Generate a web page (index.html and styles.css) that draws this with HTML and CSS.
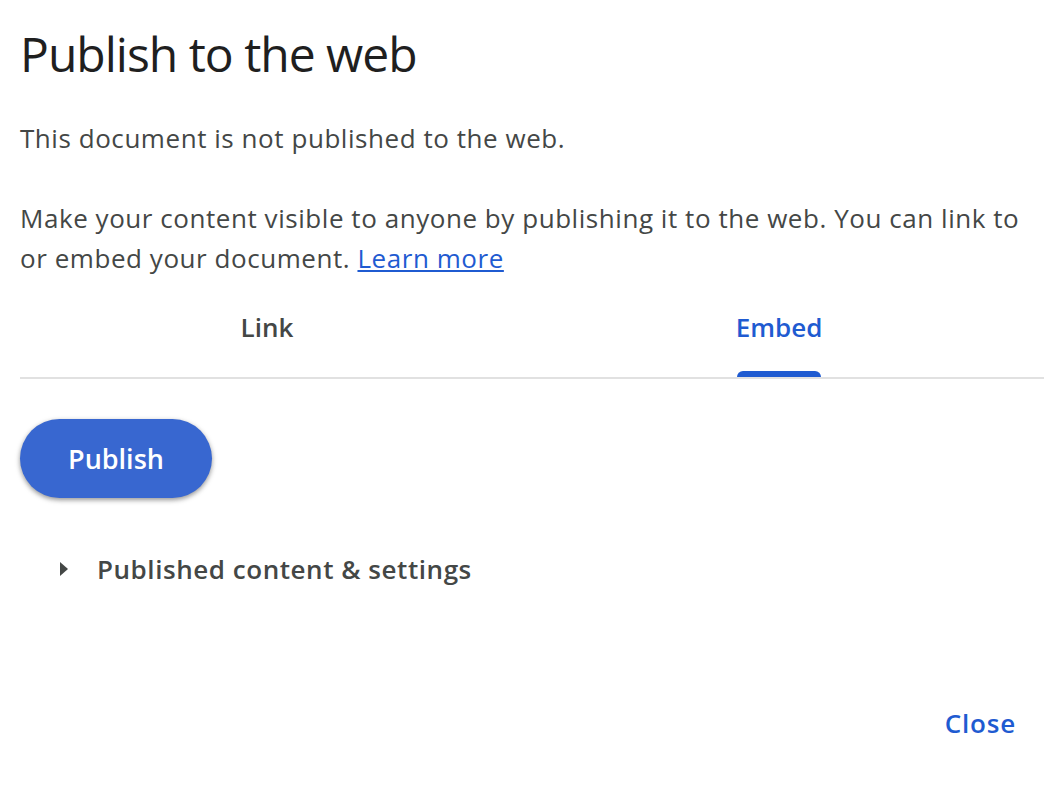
FILE: index.html
```html
<!DOCTYPE html>
<html lang="en">
<head>
    <meta charset="UTF-8">
    <meta name="viewport" content="width=device-width, initial-scale=1.0">
    <title>Publish to the web</title>
    <link rel="stylesheet" href="styles.css">
</head>
<body>
    <div class="dialog">
        <h1 class="title">Publish to the web</h1>

        <p class="status">This document is not published to the web.</p>

        <p class="intro">Make your content visible to anyone by publishing it to the web. You can link to or embed your document. <a href="#" class="learn-more">Learn more</a></p>

        <div class="tabs">
            <div class="tab-list">
                <div class="tab">Link</div>
                <div class="tab tab-active">Embed</div>
            </div>
        </div>

        <div class="tab-body">
            <button class="publish-btn">Publish</button>

            <div class="settings-toggle">
                <span class="caret"></span>
                <span class="settings-label">Published content &amp; settings</span>
            </div>
        </div>

        <div class="footer">
            <a href="#" class="close-btn">Close</a>
        </div>
    </div>
</body>
</html>
```

FILE: styles.css
```css
body {
    margin: 0;
    background-color: #fff;
    font-family: "Open Sans", Roboto, sans-serif;
    color: #444746;
}
.dialog {
    width: 1024px;
    padding: 0 20px;
}
.title {
    margin: 0;
    padding-top: 24px;
    font-size: 48px;
    font-weight: 400;
    line-height: 60px;
    letter-spacing: -1px;
    color: #1f1f1f;
}
.status {
    margin: 34px 0 0;
    font-size: 26px;
    line-height: 40px;
    letter-spacing: 0.55px;
}
.intro {
    margin: 40px 0 0;
    font-size: 26px;
    line-height: 40px;
    letter-spacing: 0.55px;
}
.learn-more {
    color: #1f5bd1;
    text-decoration: underline;
}
.tabs {
    border-bottom: 2px solid #e1e1e1;
}
.tab-list {
    display: flex;
    width: 1024px;
    margin-left: -9px;
}
.tab {
    flex: 1;
    text-align: center;
    font-size: 26px;
    font-weight: 600;
    line-height: 40px;
    padding: 29px 0 30px;
    color: #444746;
}
.tab-active {
    color: #1f5bd1;
    position: relative;
}
.tab-active::after {
    content: "";
    position: absolute;
    left: 50%;
    bottom: 0;
    width: 84px;
    margin-left: -42px;
    height: 6px;
    background-color: #1f5bd1;
    border-radius: 6px 6px 0 0;
}
.tab-body {
    padding-top: 40px;
}
.publish-btn {
    display: block;
    width: 192px;
    height: 79px;
    border: none;
    border-radius: 40px;
    background-color: #3867d0;
    color: #fff;
    font-family: inherit;
    font-size: 27px;
    font-weight: 600;
    box-shadow: 0 2px 4px rgba(0,0,0,0.3), 0 2px 6px rgba(0,0,0,0.15);
    cursor: pointer;
}
.settings-toggle {
    display: flex;
    align-items: center;
    margin-top: 51px;
    padding-left: 40px;
}
.caret {
    width: 0;
    height: 0;
    border-top: 7px solid transparent;
    border-bottom: 7px solid transparent;
    border-left: 8px solid #444746;
    margin-right: 29px;
}
.settings-label {
    font-size: 26px;
    font-weight: 600;
    line-height: 40px;
    letter-spacing: 0.55px;
}
.footer {
    display: flex;
    justify-content: flex-end;
    margin-top: 114px;
    padding-right: 28px;
}
.close-btn {
    color: #1f5bd1;
    text-decoration: none;
    font-size: 26px;
    font-weight: 600;
    line-height: 40px;
    letter-spacing: 0.8px;
}
```
